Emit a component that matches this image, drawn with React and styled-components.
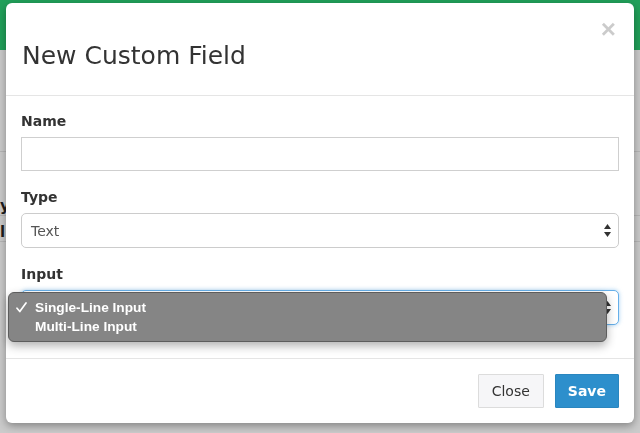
import React from 'react';
import styled, { createGlobalStyle } from 'styled-components';

const GlobalStyle = createGlobalStyle`
  html, body {
    margin: 0;
    padding: 0;
    background: #cbcbcb;
    font-family: "DejaVu Sans", Verdana, sans-serif;
    color: #333;
  }
  * { box-sizing: border-box; }
`;

const Page = styled.div`
  height: 433px;
  overflow: hidden;
  background: #cbcbcb;
`;

const Navbar = styled.div`
  height: 50px;
  background: #21a05a;
`;

const PageRow = styled.div`
  height: ${(p) => p.h}px;
  border-bottom: 1px solid #b6b6b6;
  display: flex;
  align-items: flex-end;
  font-size: 15px;
  font-weight: bold;
  color: #1e1e1e;
  overflow: hidden;
  white-space: nowrap;
`;

const Backdrop = styled.div`
  position: fixed;
  inset: 0;
  padding: 3px 6px;
`;

const Modal = styled.div`
  width: 628px;
  background: #fff;
  border-radius: 6px;
  box-shadow: 0 3px 9px rgba(0, 0, 0, 0.35);
  display: flex;
  flex-direction: column;
`;

const Header = styled.div`
  padding: 14px 16px 24px;
  border-bottom: 1px solid #e5e5e5;
  display: flex;
  flex-direction: column;
`;

const CloseX = styled.button`
  align-self: flex-end;
  border: 0;
  background: none;
  padding: 0;
  margin-right: 2px;
  font-family: "Liberation Sans", Arial, sans-serif;
  font-size: 26px;
  font-weight: bold;
  line-height: 24px;
  color: #000;
  opacity: 0.2;
  cursor: pointer;
`;

const Title = styled.h4`
  margin: 0;
  font-size: 25px;
  font-weight: normal;
  line-height: 30px;
  color: #333;
`;

const Body = styled.div`
  padding: 15px 15px 33px;
  display: flex;
  flex-direction: column;
  gap: 16px;
`;

const Group = styled.div`
  display: flex;
  flex-direction: column;
  gap: 6px;
`;

const Label = styled.label`
  font-size: 14px;
  font-weight: bold;
  line-height: 20px;
  color: #333;
`;

const TextInput = styled.div`
  height: 34px;
  border: 1px solid #cfcfcf;
  background: #fff;
`;

const SelectWrap = styled.div`
  position: relative;
`;

const SelectBox = styled.div`
  height: 35px;
  border: 1px solid ${(p) => (p.focus ? '#66afe9' : '#cccccc')};
  border-radius: 5px;
  background: #fff;
  display: flex;
  align-items: center;
  justify-content: space-between;
  padding: 0 6px 0 9px;
  font-size: 14px;
  color: #555;
  box-shadow: ${(p) =>
    p.focus ? '0 0 4px rgba(102, 175, 233, 0.6)' : 'none'};
`;

const Menu = styled.div`
  position: absolute;
  left: -13px;
  top: 2px;
  width: 599px;
  height: 50px;
  background: #858585;
  border: 1px solid #5d5d5d;
  border-radius: 6px;
  box-shadow: 0 4px 10px rgba(0, 0, 0, 0.3);
  padding: 5px 0 0 7px;
  font-family: "Liberation Sans", Arial, sans-serif;
  font-size: 13.7px;
  font-weight: bold;
  color: #fff;
`;

const MenuItem = styled.div`
  display: flex;
  align-items: center;
  height: 19px;
`;

const Check = styled.span`
  width: 19px;
  flex: none;
  display: flex;
  align-items: center;
`;

const Footer = styled.div`
  border-top: 1px solid #e5e5e5;
  padding: 15px;
  display: flex;
  justify-content: flex-end;
  gap: 11px;
`;

const Button = styled.button`
  height: 34px;
  padding: 0 ${(p) => (p.primary ? 12 : 13)}px;
  font-family: "DejaVu Sans", Verdana, sans-serif;
  font-size: 14px;
  font-weight: ${(p) => (p.primary ? 'bold' : 'normal')};
  color: ${(p) => (p.primary ? '#fff' : '#333')};
  background: ${(p) => (p.primary ? '#2d8fcc' : '#f6f6f8')};
  border: 1px solid ${(p) => (p.primary ? '#2a86bf' : '#dcdcdc')};
  border-radius: 1px;
  cursor: pointer;
`;

function Stepper() {
  return (
    <svg width="9" height="15" viewBox="0 0 9 15">
      <path d="M4.5 1 L8 6 L1 6 Z" fill="#333" />
      <path d="M4.5 14 L8 9 L1 9 Z" fill="#333" />
    </svg>
  );
}

function CheckMark() {
  return (
    <svg width="11" height="11" viewBox="0 0 11 11">
      <path
        d="M1 6.2 L3.8 9.5 L10 1"
        fill="none"
        stroke="#fff"
        strokeWidth="1.7"
        strokeLinecap="round"
        strokeLinejoin="round"
      />
    </svg>
  );
}

export default function App() {
  return (
    <>
      <GlobalStyle />
      <Page>
        <Navbar />
        <PageRow h={102} />
        <PageRow h={64}>y</PageRow>
        <PageRow h={26}>l</PageRow>
      </Page>
      <Backdrop>
        <Modal>
          <Header>
            <CloseX>×</CloseX>
            <Title>New Custom Field</Title>
          </Header>
          <Body>
            <Group>
              <Label>Name</Label>
              <TextInput />
            </Group>
            <Group>
              <Label>Type</Label>
              <SelectBox>
                <span>Text</span>
                <Stepper />
              </SelectBox>
            </Group>
            <Group>
              <Label>Input</Label>
              <SelectWrap>
                <SelectBox focus>
                  <span />
                  <Stepper />
                </SelectBox>
                <Menu>
                  <MenuItem>
                    <Check>
                      <CheckMark />
                    </Check>
                    Single-Line Input
                  </MenuItem>
                  <MenuItem>
                    <Check />
                    Multi-Line Input
                  </MenuItem>
                </Menu>
              </SelectWrap>
            </Group>
          </Body>
          <Footer>
            <Button>Close</Button>
            <Button primary>Save</Button>
          </Footer>
        </Modal>
      </Backdrop>
    </>
  );
}
